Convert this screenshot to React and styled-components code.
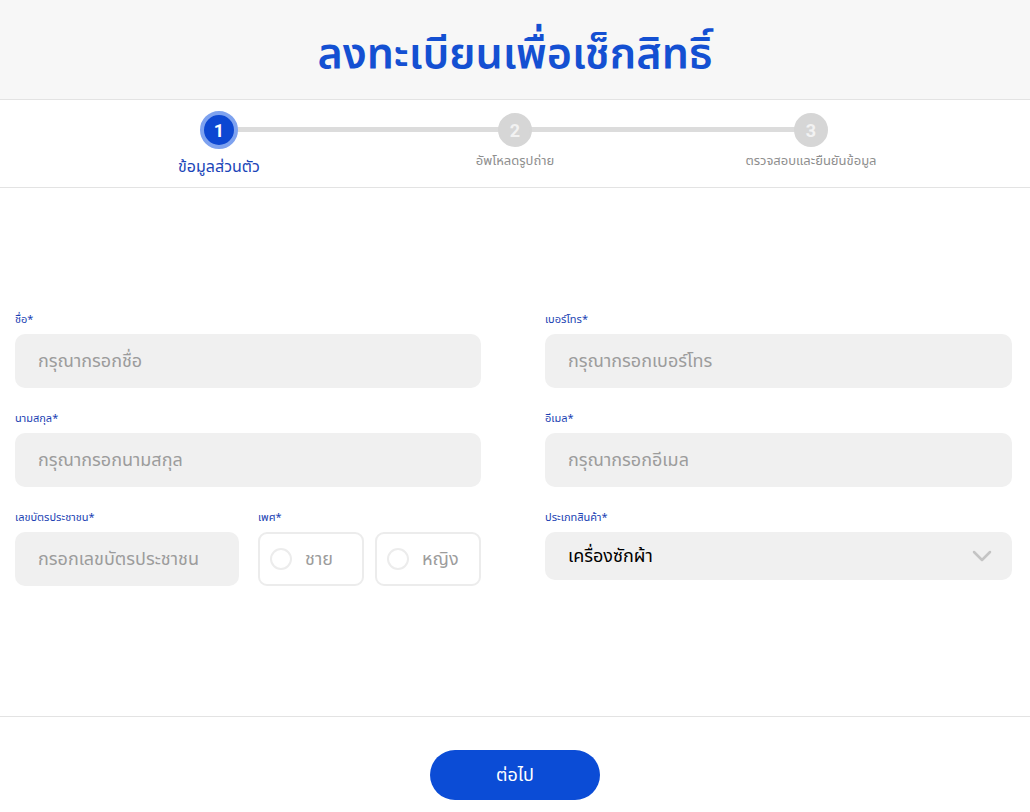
import React from "react";
import styled, { createGlobalStyle } from "styled-components";

const Global = createGlobalStyle`
  html, body { margin: 0; padding: 0; background: #fff; }
  body { font-family: "Noto Sans Thai", "Noto Sans", "DejaVu Sans", sans-serif; }
  * { box-sizing: border-box; }
`;

const Page = styled.div`
  width: 1030px;
  min-height: 812px;
  display: flex;
  flex-direction: column;
  background: #fff;
`;

const Header = styled.header`
  height: 100px;
  background: #f7f7f7;
  border-bottom: 1px solid #e3e3e3;
  display: flex;
  align-items: center;
  justify-content: center;
`;

const Title = styled.h1`
  margin: 0;
  padding-top: 10px;
  font-size: 43px;
  font-weight: 600;
  color: #1450d2;
  letter-spacing: 0;
`;

const Stepper = styled.div`
  height: 88px;
  border-bottom: 1px solid #e3e3e3;
  display: flex;
  justify-content: center;
`;

const StepTrack = styled.div`
  position: relative;
  width: 888px;
  display: grid;
  grid-template-columns: repeat(3, 1fr);
  padding-top: 11px;
`;

const Line = styled.div`
  position: absolute;
  left: 148px;
  right: 148px;
  top: 27px;
  height: 5px;
  background: #dcdcdc;
`;

const Step = styled.div`
  position: relative;
  display: flex;
  flex-direction: column;
  align-items: center;
`;

const Circle = styled.div`
  width: ${(p) => (p.$active ? "38px" : "34px")};
  height: ${(p) => (p.$active ? "38px" : "34px")};
  margin-top: ${(p) => (p.$active ? "0" : "2px")};
  border-radius: 50%;
  display: flex;
  align-items: center;
  justify-content: center;
  font-family: "Roboto", "Liberation Sans", sans-serif;
  font-weight: 700;
  font-size: 18px;
  color: ${(p) => (p.$active ? "#fff" : "#f2f2f2")};
  background: ${(p) => (p.$active ? "#0c47d2" : "#d6d6d6")};
  border: ${(p) => (p.$active ? "4px solid #7ea2ef" : "2px solid #d6d6d6")};
`;

const StepLabel = styled.div`
  margin-top: ${(p) => (p.$active ? "6px" : "4px")};
  font-size: ${(p) => (p.$active ? "16px" : "13px")};
  color: ${(p) => (p.$active ? "#1b45b8" : "#8e8e8e")};
`;

const Main = styled.main`
  padding: 124px 18px 0 15px;
  border-bottom: 1px solid #e3e3e3;
  height: 529px;
  flex: none;
`;

const Grid = styled.div`
  display: grid;
  grid-template-columns: 466px 467px;
  column-gap: 64px;
`;

const Column = styled.div`
  display: flex;
  flex-direction: column;
  gap: 23px;
`;

const Field = styled.div`
  display: flex;
  flex-direction: column;
  gap: 6px;
`;

const Label = styled.label`
  font-size: 11px;
  line-height: 16px;
  color: #1b3fb3;
`;

const Input = styled.div`
  height: 54px;
  border-radius: 10px;
  background: #f0f0f0;
  display: flex;
  align-items: center;
  padding: 0 23px;
  font-size: 18px;
  color: #9c9c9c;
`;

const SplitRow = styled.div`
  display: grid;
  grid-template-columns: 224px 1fr;
  column-gap: 19px;
`;

const RadioGroup = styled.div`
  display: grid;
  grid-template-columns: 1fr 1fr;
  gap: 11px;
`;

const RadioBox = styled.div`
  height: 54px;
  border: 2px solid #ececec;
  border-radius: 9px;
  display: flex;
  align-items: center;
  padding-left: 10px;
  gap: 13px;
  font-size: 18px;
  color: #9c9c9c;
`;

const RadioDot = styled.span`
  width: 22px;
  height: 22px;
  border-radius: 50%;
  border: 2px solid #ececec;
`;

const Select = styled.div`
  height: 48px;
  border-radius: 10px;
  background: #f0f0f0;
  display: flex;
  align-items: center;
  justify-content: space-between;
  padding: 0 20px 0 23px;
  font-size: 18px;
  color: #000;
`;

const Footer = styled.footer`
  display: flex;
  justify-content: center;
  padding-top: 33px;
`;

const Button = styled.button`
  width: 170px;
  height: 50px;
  border: none;
  border-radius: 25px;
  background: #0b4cd6;
  color: #fff;
  font-family: inherit;
  font-size: 18px;
  cursor: pointer;
`;

const steps = ["ข้อมูลส่วนตัว", "อัพโหลดรูปถ่าย", "ตรวจสอบและยืนยันข้อมูล"];

export default function App() {
  return (
    <Page>
      <Global />
      <Header>
        <Title>ลงทะเบียนเพื่อเช็กสิทธิ์</Title>
      </Header>
      <Stepper>
        <StepTrack>
          <Line />
          {steps.map((s, i) => (
            <Step key={s}>
              <Circle $active={i === 0}>{i + 1}</Circle>
              <StepLabel $active={i === 0}>{s}</StepLabel>
            </Step>
          ))}
        </StepTrack>
      </Stepper>
      <Main>
        <Grid>
          <Column>
            <Field>
              <Label>ชื่อ*</Label>
              <Input>กรุณากรอกชื่อ</Input>
            </Field>
            <Field>
              <Label>นามสกุล*</Label>
              <Input>กรุณากรอกนามสกุล</Input>
            </Field>
            <SplitRow>
              <Field>
                <Label>เลขบัตรประชาชน*</Label>
                <Input>กรอกเลขบัตรประชาชน</Input>
              </Field>
              <Field>
                <Label>เพศ*</Label>
                <RadioGroup>
                  <RadioBox>
                    <RadioDot />
                    ชาย
                  </RadioBox>
                  <RadioBox>
                    <RadioDot />
                    หญิง
                  </RadioBox>
                </RadioGroup>
              </Field>
            </SplitRow>
          </Column>
          <Column>
            <Field>
              <Label>เบอร์โทร*</Label>
              <Input>กรุณากรอกเบอร์โทร</Input>
            </Field>
            <Field>
              <Label>อีเมล*</Label>
              <Input>กรุณากรอกอีเมล</Input>
            </Field>
            <Field>
              <Label>ประเภทสินค้า*</Label>
              <Select>
                เครื่องซักผ้า
                <svg width="20" height="12" viewBox="0 0 20 12" fill="none">
                  <path d="M2 2l8 8 8-8" stroke="#c4c4c4" strokeWidth="2.5" strokeLinecap="round" strokeLinejoin="round" />
                </svg>
              </Select>
            </Field>
          </Column>
        </Grid>
      </Main>
      <Footer>
        <Button>ต่อไป</Button>
      </Footer>
    </Page>
  );
}
